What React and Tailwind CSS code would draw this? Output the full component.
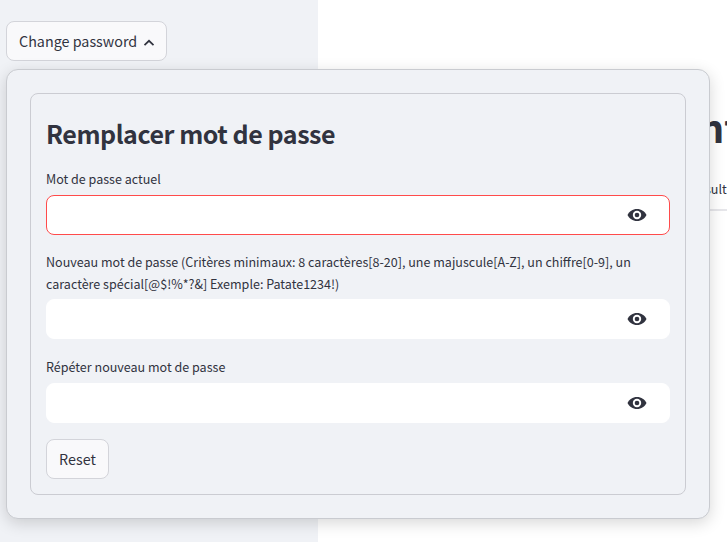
function Visibility() {
  return (
    <svg viewBox="0 0 20 14" className="mr-px h-3.5 w-5 shrink-0" aria-hidden="true">
      <path fill="#31333f" d="M10 1C5.700 1 2.200 3.400.5 7c1.700 3.600 5.200 6 9.500 6s7.800-2.400 9.500-6C17.800 3.400 14.300 1 10 1z" />
      <circle cx="10" cy="7" r="4.200" fill="#fff" />
      <circle cx="10" cy="7" r="2.300" fill="#31333f" />
    </svg>
  );
}

function PasswordField({ label, active, className, gap = "mt-1" }) {
  return (
    <label className={`block ${className}`}>
      <span className="block text-[12.54px] leading-[22px]">{label}</span>
      <span
        className={`flex h-10 items-center justify-end rounded-lg border bg-white pr-[21px] ${gap} ${
          active ? "border-[#ff4b4b]" : "border-white"
        }`}
      >
        <Visibility />
      </span>
    </label>
  );
}

export default function App() {
  return (
    <div className="relative flex h-[542px] w-[727px] overflow-hidden bg-white font-['Noto_Sans_CJK_SC',sans-serif] text-[#31333f]">
      <aside className="w-[318px] shrink-0 bg-[#f0f2f6] pl-1.5 pt-[21px]">
        <button className="flex h-10 w-[161px] items-center rounded-lg border border-[#d3d4da] bg-[#f9f9fb] pl-3 text-[14.33px]">
          <span className="whitespace-nowrap">Change password</span>
          <svg viewBox="0 0 12 8" className="ml-1.5 mt-[3px] h-2 w-3 fill-none stroke-[#31333f] stroke-[1.7]">
            <path d="M1.500 6.200 6 1.800 10.500 6.200" />
          </svg>
        </button>
      </aside>

      <main className="min-w-0 flex-1 overflow-hidden pl-[381px] pt-[99px]">
        <h1 className="h-[53px] whitespace-nowrap text-[39.5px] font-bold leading-[53px]">nt</h1>
        <p className="mt-[26px] h-[22px] whitespace-nowrap pl-1.5 text-[12.54px] leading-[22px]">sult</p>
        <hr className="mt-[9px] border-t-2 border-[#e6e6ea]" />
      </main>

      <section className="absolute left-1.5 top-[69px] h-[450px] w-[704px] rounded-xl border border-[#c9cbd0] bg-[#f0f2f6] p-[23px] shadow-[0_4px_16px_rgba(0,0,0,0.16)]">
        <form className="h-[402px] w-[656px] rounded-lg border border-[#cbccd2] px-[15px]">
          <h2 className="mt-[21px] h-9 whitespace-nowrap text-[25px] font-bold leading-9 tracking-[-0.45px]">
            Remplacer mot de passe
          </h2>
          <PasswordField className="mt-[17px]" gap="mt-[5px]" label="Mot de passe actuel" active />
          <PasswordField
            className="mt-4"
            label={
              <>
                Nouveau mot de passe (Critères minimaux: 8 caractères[8-20], une majuscule[A-Z], un chiffre[0-9], un
                <br />
                caractère spécial[@$!%*?&amp;] Exemple: Patate1234!)
              </>
            }
          />
          <PasswordField className="mt-[17px]" gap="mt-[5px]" label="Répéter nouveau mot de passe" />
          <button
            type="button"
            className="mt-4 flex h-10 w-[63px] items-center justify-center rounded-lg border border-[#d3d4da] bg-[#f9f9fb] text-[14.33px]"
          >
            Reset
          </button>
        </form>
      </section>
    </div>
  );
}
